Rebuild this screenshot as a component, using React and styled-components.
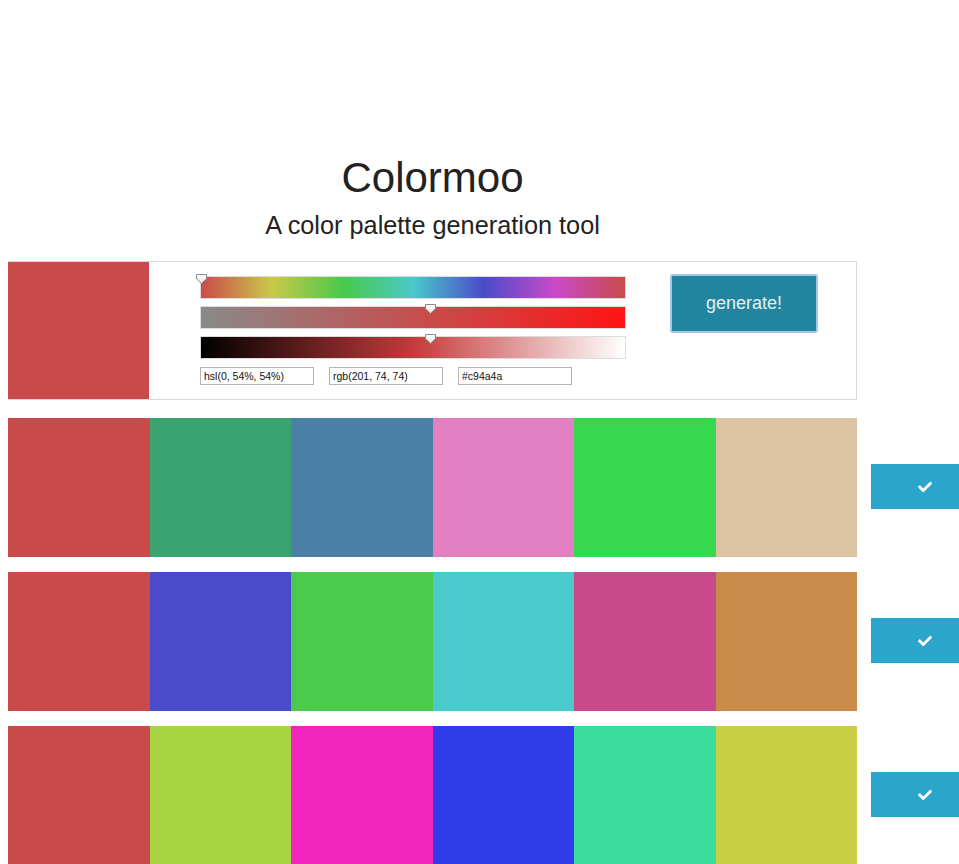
import React from "react";
import styled, { createGlobalStyle } from "styled-components";
import { FaCheck } from "react-icons/fa";

const base = { h: 0, s: 54, l: 54 };

const palettes = [
  ["#c94a4a", "#3aa36f", "#4a7fa6", "#e380c2", "#36d84d", "#dbc3a3"],
  ["#c94a4a", "#4a4bc9", "#4bcb4b", "#4acacb", "#c94a8b", "#c98b4a"],
  ["#c94a4a", "#a7d443", "#f125be", "#2f3be6", "#3bdc9d", "#c9d043"],
];

const hueStops = [0, 60, 120, 180, 240, 300, 360]
  .map((h) => `hsl(${h}, ${base.s}%, ${base.l}%)`)
  .join(", ");

const bars = [
  { bg: `linear-gradient(to right, ${hueStops})`, value: base.h / 360 },
  {
    bg: `linear-gradient(to right, hsl(0, 0%, ${base.l}%), hsl(0, 100%, ${base.l}%))`,
    value: base.s / 100,
  },
  {
    bg: `linear-gradient(to right, #000, hsl(0, ${base.s}%, 50%), #fff)`,
    value: base.l / 100,
  },
];

const GlobalStyle = createGlobalStyle`
  html {
    overflow-x: hidden;
  }
  body {
    margin: 8px 0 8px 8px;
    background: #fff;
    color: #222;
    font-family: "Liberation Sans", Arial, Helvetica, sans-serif;
  }
  ::-webkit-scrollbar {
    display: none;
  }
`;

const Main = styled.div`
  width: 849px;
`;

const Header = styled.header`
  padding-top: 146px;
  text-align: center;
`;

const Title = styled.h1`
  margin: 0;
  font-size: 42px;
  line-height: 48px;
  font-weight: normal;
  color: #222;
`;

const Subtitle = styled.h2`
  margin: 9px 0 0;
  font-size: 25.3px;
  line-height: 29px;
  font-weight: normal;
  color: #222;
`;

const Picker = styled.section`
  margin-top: 21px;
  height: 139px;
  box-sizing: border-box;
  border: 1px solid #d9d9d9;
  display: flex;
  align-items: flex-start;
`;

const BaseSwatch = styled.div`
  width: 141px;
  height: 137px;
  margin-left: -1px;
  background: ${(p) => p.$color};
`;

const Sliders = styled.div`
  width: 426px;
  margin: 14px 0 0 51px;
  display: flex;
  flex-direction: column;
  gap: 7px;
`;

const Bar = styled.div`
  position: relative;
  height: 23px;
  box-sizing: border-box;
  border: 1px solid #dcdcdc;
  background: ${(p) => p.$bg};
`;

const Thumb = styled.svg`
  position: absolute;
  top: -3px;
  width: 11px;
  height: 10px;
  margin-left: -5px;
`;

const Inputs = styled.div`
  display: flex;
  gap: 15px;
  margin-top: 1px;
`;

const Field = styled.input`
  width: 114px;
  height: 18px;
  box-sizing: border-box;
  border: 1px solid #b4b4b4;
  padding: 0 3px;
  font-family: "Liberation Sans", Arial, sans-serif;
  font-size: 10.5px;
  color: #111;
  outline: none;
`;

const Generate = styled.button`
  width: 148px;
  height: 59px;
  margin: 12px 0 0 44px;
  box-sizing: border-box;
  border: 2px solid #a4c6ea;
  border-radius: 3px;
  background: #22859f;
  color: #e4f0f4;
  font-family: "Liberation Sans", Arial, sans-serif;
  font-size: 18px;
  cursor: pointer;
`;

const Palettes = styled.div`
  margin-top: 18px;
  display: flex;
  flex-direction: column;
  gap: 15px;
`;

const Row = styled.div`
  display: flex;
  align-items: center;
`;

const Palette = styled.div`
  width: 849px;
  height: 139px;
  flex-shrink: 0;
  display: flex;
`;

const Swatch = styled.div`
  flex: 1;
  background: ${(p) => p.$color};
`;

const Pick = styled.button`
  flex-shrink: 0;
  width: 88px;
  height: 45px;
  margin: -2px 0 0 14px;
  padding: 0 0 0 47px;
  border: none;
  background: #2ba5cb;
  color: #fff;
  display: flex;
  align-items: center;
  cursor: pointer;
`;

const SliderThumb = ({ value }) => (
  <Thumb viewBox="0 0 11 10" style={{ left: `${value * 100}%` }}>
    <defs>
      <linearGradient id="thumbFill" x1="0" y1="0" x2="0" y2="1">
        <stop offset="0" stopColor="#ffffff" />
        <stop offset="1" stopColor="#e2e2e2" />
      </linearGradient>
    </defs>
    <polygon
      points="0.5,0.5 10.5,0.5 10.5,4.8 5.5,9.5 0.5,4.8"
      fill="url(#thumbFill)"
      stroke="#8a8a8a"
      strokeWidth="1"
    />
  </Thumb>
);

const App = () => {
  return (
    <Main>
      <GlobalStyle />
      <Header>
        <Title>Colormoo</Title>
        <Subtitle>A color palette generation tool</Subtitle>
      </Header>

      <Picker>
        <BaseSwatch $color="#c94a4a" />
        <Sliders>
          {bars.map((bar, i) => (
            <Bar key={i} $bg={bar.bg}>
              <SliderThumb value={bar.value} />
            </Bar>
          ))}
          <Inputs>
            <Field defaultValue="hsl(0, 54%, 54%)" />
            <Field defaultValue="rgb(201, 74, 74)" />
            <Field defaultValue="#c94a4a" />
          </Inputs>
        </Sliders>
        <Generate>generate!</Generate>
      </Picker>

      <Palettes>
        {palettes.map((colors, i) => (
          <Row key={i}>
            <Palette>
              {colors.map((c, j) => (
                <Swatch key={j} $color={c} />
              ))}
            </Palette>
            <Pick>
              <FaCheck size={14} />
            </Pick>
          </Row>
        ))}
      </Palettes>
    </Main>
  );
};

export default App;
